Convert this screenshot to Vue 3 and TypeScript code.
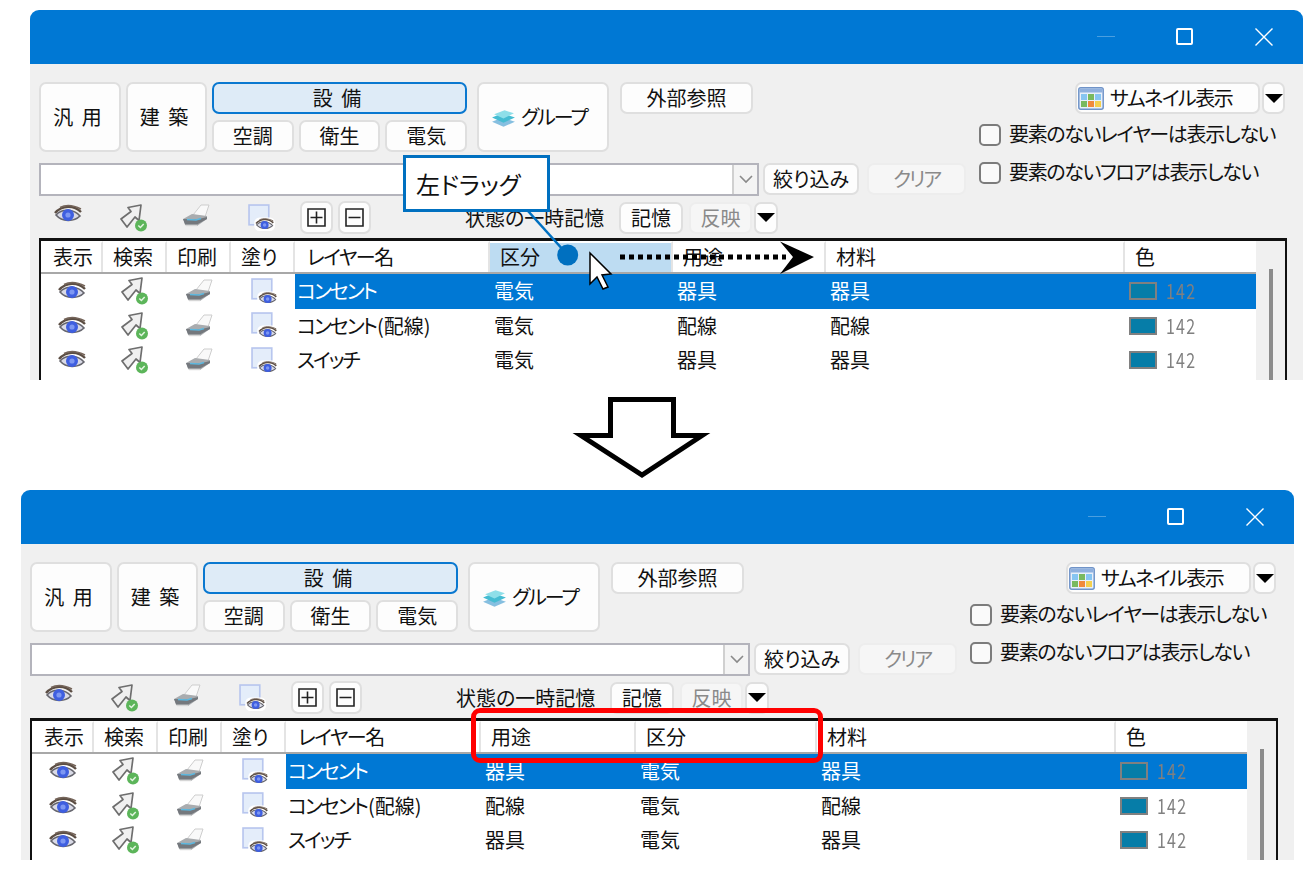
<script setup lang="ts">
type ColKey = 'kubun' | 'yoto'
interface Row { name: string; suffix: string; kubun: string; yoto: string; zai: string; sel: boolean }
interface Win { id: string; order: ColKey[]; widths: [number, number]; drag: boolean }

const labels: Record<ColKey, string> = { kubun: '区分', yoto: '用途' }
const rows: Row[] = [
  { name: 'コンセント', suffix: '', kubun: '電気', yoto: '器具', zai: '器具', sel: true },
  { name: 'コンセント', suffix: '(配線)', kubun: '電気', yoto: '配線', zai: '配線', sel: false },
  { name: 'スイッチ', suffix: '', kubun: '電気', yoto: '器具', zai: '器具', sel: false },
]
const windows: Win[] = [
  { id: 'before', order: ['kubun', 'yoto'], widths: [183, 153], drag: true },
  { id: 'after', order: ['yoto', 'kubun'], widths: [155, 181], drag: false },
]
const iconNames = ['eye', 'find', 'printer', 'fill']
const gridOf = (w: Win) => ({
  gridTemplateColumns: `62px 64px 64px 64px 195px ${w.widths[0]}px ${w.widths[1]}px 299px 131px`,
})
</script>

<template>
  <div class="page">
    <svg class="defs" aria-hidden="true">
      <symbol id="eye" viewBox="0 0 28 20">
        <path d="M2 11C8 4 20 5 26 12C20 18 8 18 2 11Z" fill="#d9dae6" stroke="#66666e" stroke-width="1.6" />
        <circle cx="14" cy="11" r="6" fill="#3f5fe0" />
        <circle cx="14" cy="11" r="2.6" fill="#7d97f2" />
        <path d="M1 9C8 1 20 1 27 8" fill="none" stroke="#5c4e44" stroke-width="2.4" />
        <path d="M6 3.5C12 0.5 20 1.5 27 5" fill="none" stroke="#75655a" stroke-width="1.4" />
      </symbol>
      <symbol id="find" viewBox="0 0 30 28">
        <path d="M22 1L9 3.5L12 7.5L2 15L8 23L16 13L20 16.5Z" fill="#f0f0f0" stroke="#6e6e6e" stroke-width="1.7" stroke-linejoin="round" />
        <circle cx="22" cy="21.5" r="6" fill="#5cb55a" />
        <path d="M19.3 21.5L21.4 23.5L24.7 19.9" fill="none" stroke="#e4f5e2" stroke-width="1.5" />
      </symbol>
      <symbol id="printer" viewBox="0 0 30 24">
        <path d="M12 11L20 1H28L24 13Z" fill="#f9f9f9" stroke="#cdcdcd" />
        <path d="M2 15L11 10L26 12L26 15L16 22H5Z" fill="#a9acaf" />
        <path d="M2 15L16 15.5L26 13L26 15L16 20.5H4Z" fill="#74787d" />
        <path d="M6 15.5L15 16L20 14.5" fill="none" stroke="#5db8df" stroke-width="1.4" />
        <path d="M5 21.5H16" stroke="#d6d6d6" stroke-width="1.4" />
      </symbol>
      <symbol id="fill" viewBox="0 0 26 26">
        <rect x="1" y="1" width="19" height="19" fill="#e4edfa" stroke="#b8c6ee" stroke-width="1.6" />
        <rect x="6" y="13" width="20" height="13" rx="5" fill="#fff" />
        <use href="#eye" x="7" y="13" width="18" height="13" />
      </symbol>
    </svg>

    <template v-for="(win, wi) in windows" :key="win.id">
      <section class="window" :class="win.id">
        <header class="titlebar">
          <span class="ctl"><i class="min"></i></span>
          <span class="ctl"><i class="max"></i></span>
          <span class="ctl">
            <svg width="20" height="20" viewBox="0 0 20 20"><path d="M1.5 1.5L18.5 18.5M18.5 1.5L1.5 18.5" stroke="#fff" stroke-width="1.4" /></svg>
          </span>
        </header>

        <div class="tools">
          <div class="left">
            <div class="row1">
              <button class="btn tall first spaced">汎 用</button>
              <button class="btn tall second spaced">建 築</button>
              <div class="equip">
                <button class="btn active spaced">設 備</button>
                <div class="subs">
                  <button class="btn">空調</button>
                  <button class="btn">衛生</button>
                  <button class="btn">電気</button>
                </div>
              </div>
              <button class="btn tall group">
                <svg class="stack" width="25" height="19" viewBox="0 0 24 18">
                  <path d="M1 12L11 8L23 12L12 17Z" fill="#86bfe0" />
                  <path d="M1 8L11 4L23 8L12 13Z" fill="#45bcd2" />
                  <path d="M3 5L13 1L22 4L12 9Z" fill="#8edfe9" />
                </svg>
                <span class="tight">グループ</span>
              </button>
              <button class="btn ext">外部参照</button>
            </div>
            <div class="row2">
              <div class="combo">
                <span class="field"></span>
                <span class="chev">
                  <svg width="14" height="9" viewBox="0 0 14 9"><path d="M1 1L7 7L13 1" fill="none" stroke="#8a8a8a" stroke-width="1.6" /></svg>
                </span>
              </div>
              <button class="btn narrow">絞り込み</button>
              <button class="btn clear off"><span class="tight">クリア</span></button>
            </div>
            <div class="row3">
              <div class="icons">
                <span v-for="n in iconNames" :key="n" class="icell" :class="n">
                  <svg class="ico" :class="n"><use :href="`#${n}`" /></svg>
                </span>
              </div>
              <button class="btn sq">
                <svg width="19" height="19" viewBox="0 0 19 19"><path d="M1 1H18V18H1ZM3.5 9.5H15.5M9.5 3.5V15.5" fill="none" stroke="#222" stroke-width="1.6" /></svg>
              </button>
              <button class="btn sq">
                <svg width="19" height="19" viewBox="0 0 19 19"><path d="M1 1H18V18H1ZM3.5 9.5H15.5" fill="none" stroke="#222" stroke-width="1.6" /></svg>
              </button>
              <span class="memo">状態の一時記憶</span>
              <button class="btn m64">記憶</button>
              <button class="btn m63 off">反映</button>
              <button class="btn drop"><i class="tri"></i></button>
            </div>
          </div>

          <div class="right">
            <div class="thumbrow">
              <button class="btn thumb">
                <svg width="26" height="23" viewBox="0 0 26 23">
                  <rect x="0.8" y="0.8" width="24.4" height="21.4" rx="2" fill="#e9f0fa" stroke="#6f93c8" stroke-width="1.5" />
                  <rect x="1.5" y="1.5" width="23" height="4" fill="#8fb0de" />
                  <rect x="3" y="7" width="6" height="6" fill="#86c5f2" />
                  <rect x="10" y="7" width="6" height="6" fill="#79b95f" />
                  <rect x="17" y="7" width="6" height="6" fill="#86c5f2" />
                  <rect x="3" y="14" width="6" height="6" fill="#79b95f" />
                  <rect x="10" y="14" width="6" height="6" fill="#f08a3c" />
                  <rect x="17" y="14" width="6" height="6" fill="#f4d04f" />
                </svg>
                <span class="thumb-label">サムネイル表示</span>
              </button>
              <button class="btn drop thumbdrop"><i class="tri"></i></button>
            </div>
            <label class="check one"><i class="box"></i><span>要素のないレイヤーは表示しない</span></label>
            <label class="check two"><i class="box"></i><span>要素のないフロアは表示しない</span></label>
          </div>
        </div>

        <div class="table">
          <div class="main">
            <div class="thead" :style="gridOf(win)">
              <span class="th">表示</span>
              <span class="th">検索</span>
              <span class="th">印刷</span>
              <span class="th">塗り</span>
              <span class="th name">レイヤー名</span>
              <span
                v-for="k in win.order"
                :key="k"
                class="th"
                :class="{ dragging: win.drag && k === 'kubun' }"
              >{{ labels[k] }}</span>
              <span class="th">材料</span>
              <span class="th last">色</span>
            </div>
            <div v-for="r in rows" :key="r.name + r.suffix" class="tr" :style="gridOf(win)">
              <span v-for="n in iconNames" :key="n" class="icon-td" :class="n">
                <svg class="ico" :class="n"><use :href="`#${n}`" /></svg>
              </span>
              <span class="td" :class="{ sel: r.sel }"><span class="kana">{{ r.name }}</span>{{ r.suffix }}</span>
              <span v-for="k in win.order" :key="k" class="td" :class="{ sel: r.sel }">{{ r[k] }}</span>
              <span class="td" :class="{ sel: r.sel }">{{ r.zai }}</span>
              <span class="td colour" :class="{ sel: r.sel }"><i class="swatch"></i><b class="num">142</b></span>
            </div>
          </div>
          <div class="scroll"><i class="thumb-bar"></i></div>
        </div>

        <template v-if="win.drag">
          <div class="callout">左ドラッグ</div>
          <svg class="overlay" width="1273" height="370" viewBox="0 0 1273 370">
            <path d="M498 201L537.7 245" stroke="#0070c0" stroke-width="2.6" />
            <circle cx="537.7" cy="245" r="10.5" fill="#0070c0" />
            <path d="M590 247H756" stroke="#000" stroke-width="5" stroke-dasharray="5 4" />
            <path d="M750 231.5L784 247L750 264L763 247Z" fill="#000" />
            <path d="M560 243V274L567 267L573 279L578 277L572 265L581 264Z" fill="#fff" stroke="#000" stroke-width="1.5" />
          </svg>
        </template>
        <div v-else class="redbox"></div>
      </section>

      <div v-if="wi === 0" class="between">
        <svg width="140" height="82" viewBox="0 0 140 82">
          <path d="M38.5 2.5H101.5V38.5H130L70 78L9 38.5H38.5Z" fill="#fff" stroke="#000" stroke-width="5" />
        </svg>
      </div>
    </template>
  </div>
</template>

<style scoped>
.page {
  width: 1316px;
  height: 874px;
  padding-top: 10px;
  box-sizing: border-box;
  background: #fff;
  font-family: "Noto Sans CJK JP", "Noto Sans", sans-serif;
  font-feature-settings: "palt";
  font-size: 20px;
  color: #111;
  overflow: hidden;
}
.defs { position: absolute; width: 0; height: 0; }
.window {
  position: relative;
  width: 1273px;
  height: 370px;
  background: #f0f0f0;
  border-radius: 9px 9px 0 0;
  overflow: hidden;
  display: flex;
  flex-direction: column;
}
.before { margin-left: 30px; }
.after { margin-left: 21px; }
.between {
  height: 110px;
  box-sizing: border-box;
  padding: 17px 0 0 572px;
}
.between svg { display: block; }

.titlebar {
  flex: none;
  height: 54px;
  background: #0078d4;
  display: flex;
  justify-content: flex-end;
}
.ctl {
  width: 78.5px;
  display: flex;
  align-items: center;
  justify-content: center;
}
.min { display: block; width: 18px; height: 1.5px; margin-top: -1px; margin-right: 2px; background: #4a9fe0; }
.max { display: block; width: 17px; height: 17px; box-sizing: border-box; border: 2px solid #fff; border-radius: 2px; margin-top: -1px; margin-right: 2px; }

.tools {
  flex: none;
  display: flex;
  justify-content: space-between;
  padding: 18px 18px 0 9px;
}
.left { width: 927px; }
.right { width: 306px; }

.btn {
  box-sizing: border-box;
  height: 32px;
  padding: 0;
  background: #fdfdfd;
  border: 2px solid #dfdfdf;
  border-radius: 7px;
  font: inherit;
  font-feature-settings: inherit;
  color: #111;
  line-height: 1;
  display: flex;
  align-items: center;
  justify-content: center;
}
.btn.off { background: #f6f6f6; color: #8a8a8a; border-color: #ededed; }
.spaced { letter-spacing: 2px; padding-right: 3px; }
.tight { letter-spacing: -2px; }
.row1 { display: flex; height: 70px; align-items: flex-start; }
.tall { height: 70px; }
.first { width: 82px; margin-right: 5px; }
.second { width: 81px; margin-right: 5px; }
.equip { width: 255px; margin-right: 10px; }
.active { width: 100%; background: #deebf7; border-color: #0a78d0; }
.subs { display: flex; gap: 5px; margin-top: 6px; }
.subs .btn { flex: 1; }
.group { width: 132px; margin-right: 11px; gap: 5px; padding-right: 8px; }
.stack { filter: blur(0.5px); margin-top: 3px; }
.ext { width: 133px; }

.row2 { display: flex; height: 33px; margin-top: 11px; }
.combo { display: flex; width: 720px; height: 33px; box-sizing: border-box; border: 2px solid #b4b4bc; background: #fff; margin-right: 4px; }
.field { flex: 1; }
.chev { width: 23px; background: #f4f4f4; border-left: 2px solid #d0d0d0; display: flex; align-items: center; justify-content: center; }
.narrow { width: 96px; margin-right: 8px; }
.clear { width: 99px; }

.row3 { display: flex; align-items: center; height: 33px; margin-top: 5px; }
.icons { display: flex; width: 264px; margin-left: -3px; flex: none; }
.icell { width: 64px; display: flex; justify-content: center; }
.icell.find { padding-left: 3px; box-sizing: border-box; }
.icell.fill { padding-left: 3px; box-sizing: border-box; }
.sq { width: 33px; height: 33px; margin-right: 5px; }
.memo { margin-left: 89px; margin-right: 8px; white-space: nowrap; width: 146px; }
.m64 { width: 64px; margin-right: 6px; }
.m63 { width: 63px; margin-right: 2px; }
.drop { width: 24px; }
.tri { width: 0; height: 0; border-left: 9px solid transparent; border-right: 9px solid transparent; border-top: 9px solid #000; }

.ico { display: block; flex: none; filter: blur(0.35px); }
.ico.eye { width: 28px; height: 20px; }
.ico.find { width: 30px; height: 28px; }
.ico.printer { width: 30px; height: 24px; }
.ico.fill { width: 27px; height: 27px; }

.thumbrow { display: flex; justify-content: flex-end; gap: 2px; }
.thumb { width: 185px; justify-content: flex-start; padding-left: 1px; gap: 6px; }
.thumb-label { letter-spacing: -1.5px; }
.thumbdrop { width: 23px; }
.check { display: flex; align-items: center; gap: 8px; height: 22px; white-space: nowrap; letter-spacing: -1.35px; }
.check span { margin-top: -3px; }
.check.one { margin-top: 10px; }
.check.two { margin-top: 16px; }
.box { display: block; flex: none; width: 22px; height: 22px; box-sizing: border-box; border: 2px solid #7c7c7c; border-radius: 5px; background: #fafafa; }

.table {
  flex: 1;
  min-height: 0;
  display: flex;
  margin: 4px 0 0 9px;
  width: 1248px;
  box-sizing: border-box;
  border: 2px solid #111;
  border-top-width: 3px;
  border-bottom: 0;
}
.main { flex: 1; background: #fff; }
.thead {
  display: grid;
  height: 33px;
  box-sizing: border-box;
  border-bottom: 2px solid #a8a8a8;
}
.th {
  border-top: 2px solid #fff;
  border-right: 2px solid #e4e4e4;
  padding-left: 10px;
  line-height: 27px;
  white-space: nowrap;
}
.th:first-child { padding-left: 12px; }
.th.name { letter-spacing: -1.5px; padding-left: 12px; }
.th.last { border-right: 0; }
.th.dragging { background: #bddcf2; }
.tr { display: grid; height: 34.5px; }
.icon-td { display: flex; align-items: center; justify-content: center; }
.icon-td.fill { padding-left: 2px; }
.td {
  padding-left: 4px;
  line-height: 34px;
  white-space: nowrap;
  overflow: hidden;
}
.td:nth-child(5) { padding-left: 2px; }
.kana { letter-spacing: -2px; margin-right: 1px; }
.td.sel { background: #0078d4; color: #fff; }
.colour { display: flex; align-items: center; gap: 9px; }
.swatch { display: block; width: 28px; height: 18px; box-sizing: border-box; border: 2px solid #808080; background: #067da8; }
.num { display: inline-block; font-weight: 400; color: #808080; letter-spacing: 1.5px; transform: scaleX(0.8); transform-origin: left center; }
.scroll { width: 29px; display: flex; justify-content: center; background: #f0f0f0; }
.thumb-bar { display: block; width: 4px; margin-top: 28px; background: #8b8b8b; }

.callout {
  position: absolute;
  left: 373px;
  top: 145px;
  width: 147px;
  height: 57px;
  box-sizing: border-box;
  border: 3px solid #0070c0;
  background: #fff;
  font-size: 24px;
  line-height: 51px;
  padding-left: 10px;
  white-space: nowrap;
}
.overlay { position: absolute; left: 0; top: 0; pointer-events: none; }
.redbox {
  position: absolute;
  left: 450px;
  top: 218px;
  width: 352px;
  height: 55px;
  box-sizing: border-box;
  border: 5px solid #ff0000;
  border-radius: 9px;
}
</style>
